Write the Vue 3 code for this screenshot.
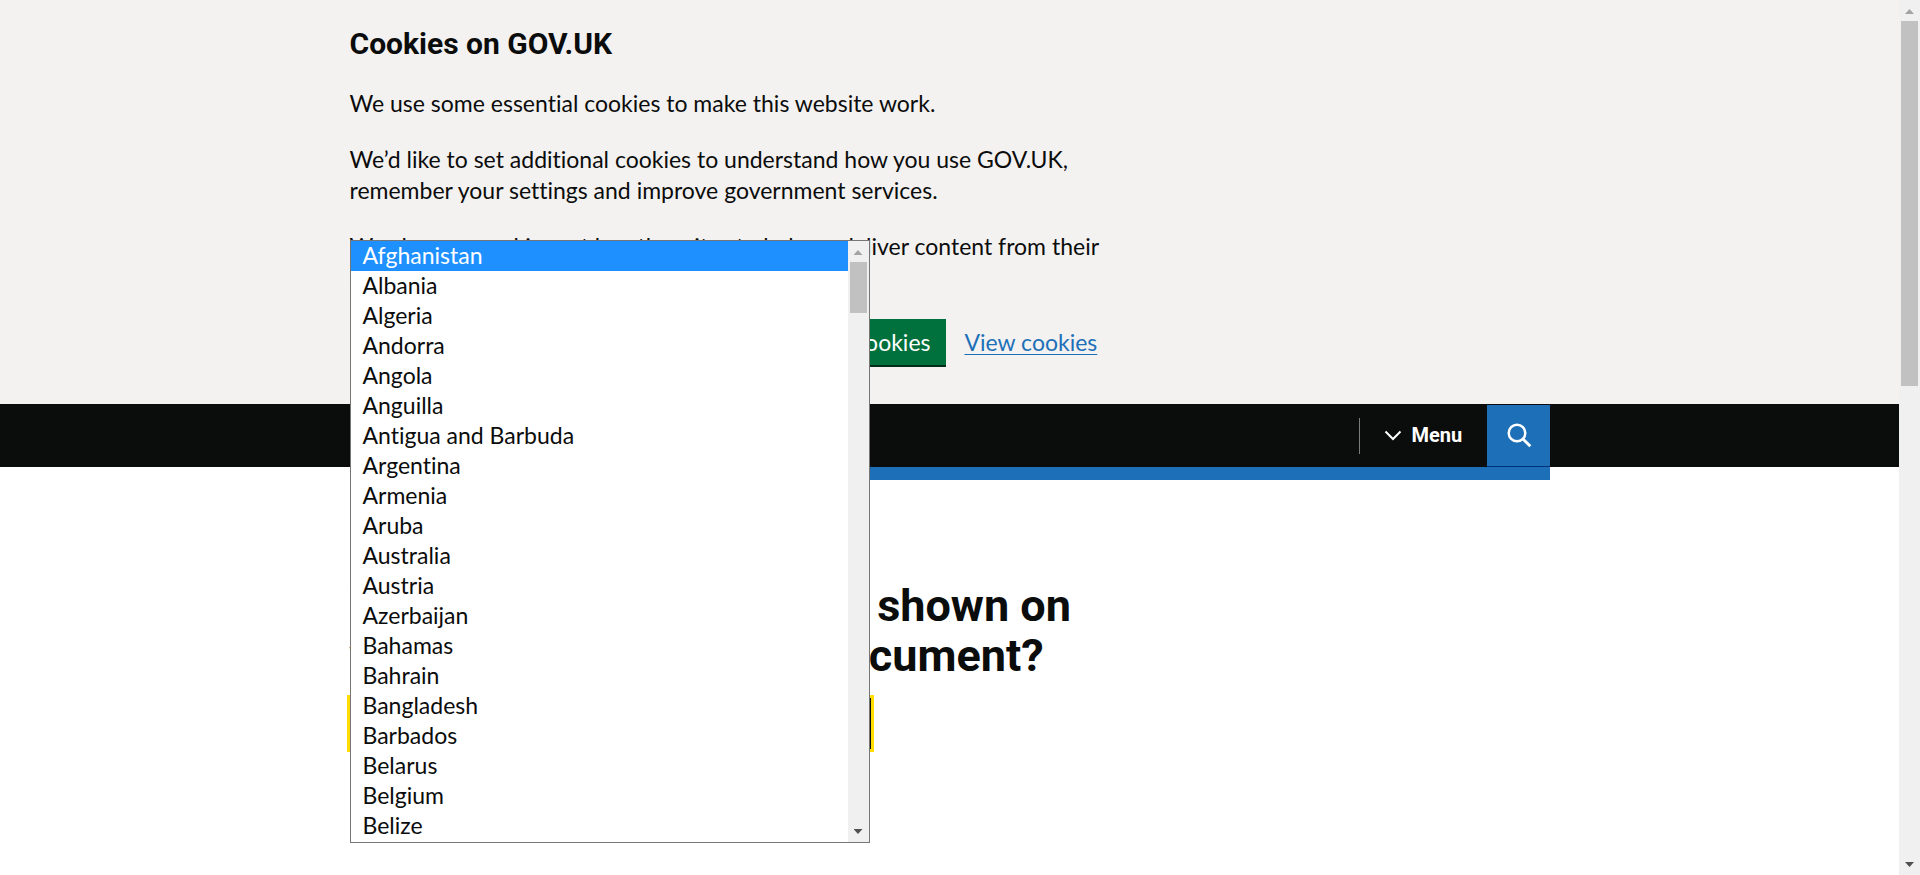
<script setup>
import { ref } from 'vue'

const countries = [
  'Afghanistan', 'Albania', 'Algeria', 'Andorra', 'Angola', 'Anguilla',
  'Antigua and Barbuda', 'Argentina', 'Armenia', 'Aruba', 'Australia',
  'Austria', 'Azerbaijan', 'Bahamas', 'Bahrain', 'Bangladesh', 'Barbados',
  'Belarus', 'Belgium', 'Belize',
]
const selected = ref('Afghanistan')
</script>

<template>
  <div class="window">
    <div class="page">
      <section class="cookie-banner" aria-label="Cookies on GOV.UK">
        <div class="container">
          <div class="message">
            <h2>Cookies on GOV.UK</h2>
            <p>We use some essential cookies to make this website work.</p>
            <p>We’d like to set additional cookies to understand how you use GOV.UK, remember your settings and improve government services.</p>
            <p>We also use cookies set by other sites to help us deliver content from their services.</p>
          </div>
          <div class="actions">
            <div class="buttons">
              <button type="button" class="button">Accept additional cookies</button>
              <button type="button" class="button">Reject additional cookies</button>
            </div>
            <a href="#cookies" class="link">View cookies</a>
          </div>
        </div>
      </section>

      <header class="header">
        <div class="container header-row">
          <a href="#home" class="logo">GOV.UK</a>
          <button type="button" class="menu">
            <svg class="chevron" width="18" height="12" viewBox="0 0 18 12" aria-hidden="true">
              <path d="M1.5 1.5 L9 9 L16.500 1.500" fill="none" stroke="#fff" stroke-width="2" />
            </svg>
            Menu
          </button>
          <button type="button" class="search" aria-label="Search GOV.UK">
            <svg width="25" height="25" viewBox="0 0 25 25" aria-hidden="true">
              <circle cx="10" cy="10" r="8.300" fill="none" stroke="#fff" stroke-width="2.500" />
              <path d="M15.800 15.800 L23.300 23.300" fill="none" stroke="#fff" stroke-width="3" />
            </svg>
          </button>
        </div>
      </header>
      <div class="container"><div class="blue-bar"></div></div>

      <main class="container main">
        <h1><label for="country">What’s your nationality as shown on your passport or travel document?</label></h1>
        <div class="field">
          <select id="country" v-model="selected">
            <option v-for="name in countries" :key="name">{{ name }}</option>
          </select>
          <div class="popup">
            <ul role="listbox" aria-label="Countries">
              <li
                v-for="name in countries"
                :key="name"
                role="option"
                :aria-selected="name === selected"
                :class="{ active: name === selected }"
                @click="selected = name"
              >{{ name }}</li>
            </ul>
            <div class="scrollbar" aria-hidden="true">
              <span class="arrow up"></span>
              <span class="track"><span class="thumb short"></span></span>
              <span class="arrow down"></span>
            </div>
          </div>
        </div>
      </main>
    </div>
    <div class="scrollbar page-bar" aria-hidden="true">
      <span class="arrow up"></span>
      <span class="track"><span class="thumb"></span></span>
      <span class="arrow down"></span>
    </div>
  </div>
</template>

<style>
body {
  background: #fff;
}
</style>

<style scoped>
.window {
  display: flex;
  height: 100vh;
  overflow: hidden;
  color: #0b0c0c;
  font-family: Lato, Roboto, "Liberation Sans", sans-serif;
  font-size: 23px;
  font-variant-ligatures: none;
  line-height: 31px;
}
.page {
  flex: 1;
  min-width: 0;
}
.container {
  max-width: 1200px;
  margin: 0 auto;
}
h1, h2, p, ul {
  margin: 0;
  padding: 0;
}
button {
  font: inherit;
  border: 0;
  border-radius: 0;
  cursor: pointer;
}
.cookie-banner {
  background: #f3f2f1;
  padding: 25px 0 39px;
}
.message {
  display: flex;
  flex-direction: column;
  gap: 25px;
  max-width: 780px;
}
h2 {
  font: 700 30px/38px Roboto, "Liberation Sans", sans-serif;
}
.actions {
  display: flex;
  align-items: center;
  gap: 19px;
  margin-top: 26px;
}
.buttons {
  display: flex;
  gap: 19px;
  width: 596px;
}
.button {
  flex: 1;
  padding: 8px 15px 7px;
  background: #00703c;
  color: #fff;
  box-shadow: 0 2px 0 #002d18;
  text-align: right;
  white-space: nowrap;
  font-variant-ligatures: none;
}
.link {
  color: #1d70b8;
  text-decoration-thickness: 1px;
  text-underline-offset: 3px;
}
.header {
  background: #0b0c0c;
  color: #fff;
  font: 700 20px/25px Roboto, "Liberation Sans", sans-serif;
}
.header-row {
  display: flex;
  align-items: center;
  height: 63px;
}
.logo {
  margin-right: auto;
  color: #fff;
  font-size: 30px;
  text-decoration: none;
}
.menu {
  display: flex;
  align-items: center;
  gap: 10px;
  width: 128px;
  height: 36px;
  padding: 0 0 0 24px;
  border-left: 1px solid #7b7d7d;
  background: none;
  color: #fff;
}
.search {
  display: flex;
  align-items: center;
  justify-content: center;
  align-self: flex-end;
  width: 63px;
  height: 62px;
  padding: 0 0 0 3px;
  border-bottom: 1px solid #003078;
  background: #1d70b8;
}
.blue-bar {
  height: 13px;
  background: #1d70b8;
}
.main {
  padding-top: 101px;
}
h1 {
  max-width: 780px;
  margin-bottom: 17px;
  font: 700 45px/50px Roboto, "Liberation Sans", sans-serif;
}
.field {
  position: relative;
  width: 521px;
}
select {
  display: block;
  width: 100%;
  height: 51px;
  padding: 6px;
  border: 3px solid #0b0c0c;
  border-radius: 0;
  outline: 3px solid #fd0;
  background: #fff;
  color: inherit;
  font: inherit;
}
.popup {
  position: absolute;
  left: 0;
  bottom: -94px;
  display: flex;
  box-sizing: border-box;
  width: 520px;
  border: 1px solid #767676;
  background: #fff;
}
ul {
  flex: 1;
  padding-bottom: 1px;
  list-style: none;
}
li {
  padding: 0 12px 2px;
  line-height: 28px;
  cursor: default;
}
li.active {
  background: #1e90ff;
  color: #fff;
}
.scrollbar {
  display: flex;
  flex-direction: column;
  align-items: center;
  box-sizing: border-box;
  width: 21px;
  padding: 9px 0 8px;
  background: #f0f0f0;
}
.arrow {
  width: 9px;
  height: 5px;
}
.up {
  background: #a3a3a3;
  clip-path: polygon(50% 0, 100% 100%, 0 100%);
}
.down {
  background: #505050;
  clip-path: polygon(0 0, 100% 0, 50% 100%);
}
.track {
  flex: 1;
  width: 17px;
  padding: 7px 0;
}
.thumb {
  display: block;
  height: 43.8%;
  background: #c1c1c1;
}
.thumb.short {
  height: 9.1%;
}
</style>
